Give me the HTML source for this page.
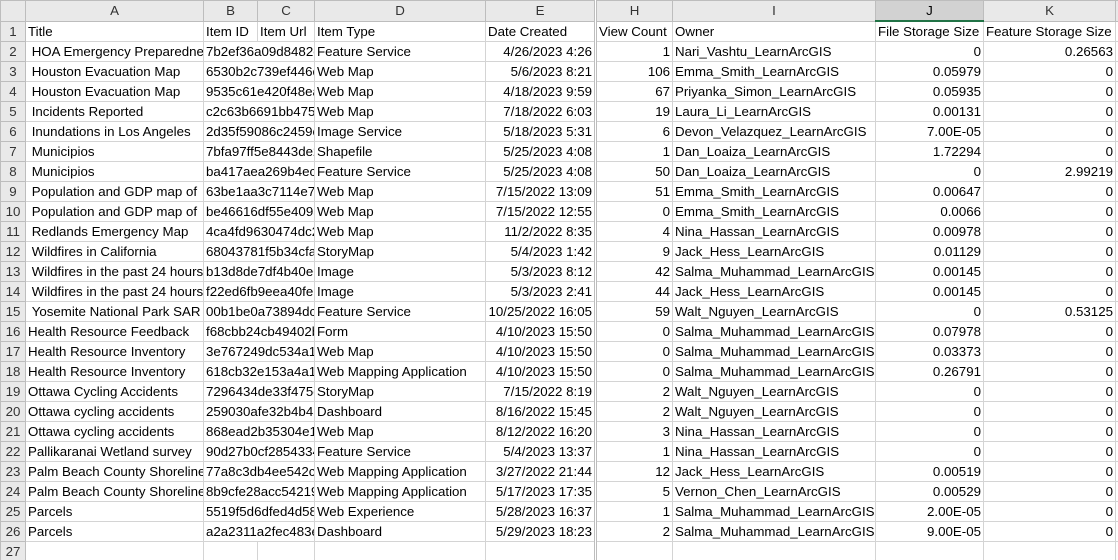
<!DOCTYPE html>
<html><head><meta charset="utf-8"><style>
html,body{margin:0;padding:0;background:#fff;width:1118px;height:560px;overflow:hidden}
table{border-collapse:collapse;table-layout:fixed;width:1118px;font-family:"Liberation Sans",Arial,sans-serif;font-size:13.3px;color:#000}
td{height:19px;border:1px solid #d4d4d4;padding:0 2px;white-space:nowrap;overflow:hidden;line-height:19px}
tr.h td{background:#e9e9e9;border-color:#bdbdbd;text-align:center;color:#333}
td.r{text-align:right}
td.n{background:#e9e9e9;border-color:#bdbdbd;text-align:center;color:#333;padding:0}
tr.h td.sel{background:#d2d2d2;border-bottom:2px solid #217346;color:#000}
td.g{border-left:3px double #bdbdbd}
</style></head><body>
<table>
<colgroup><col style="width:25px"><col style="width:178px"><col style="width:54px"><col style="width:57px"><col style="width:171px"><col style="width:110px"><col style="width:77px"><col style="width:203px"><col style="width:108px"><col style="width:132px"><col style="width:3px"></colgroup>
<tr class="h"><td></td><td>A</td><td>B</td><td>C</td><td>D</td><td>E</td><td class="g">H</td><td>I</td><td class="sel">J</td><td>K</td><td></td></tr>
<tr><td class="n">1</td><td>Title</td><td>Item ID</td><td>Item Url</td><td>Item Type</td><td>Date Created</td><td class="g">View Count</td><td>Owner</td><td>File Storage Size</td><td>Feature Storage Size</td><td></td></tr>
<tr><td class="n">2</td><td>&nbsp;HOA Emergency Preparedness</td><td colspan="2">7b2ef36a09d8482c8</td><td>Feature Service</td><td class="r">4/26/2023 4:26</td><td class="r g">1</td><td>Nari_Vashtu_LearnArcGIS</td><td class="r">0</td><td class="r">0.26563</td><td></td></tr>
<tr><td class="n">3</td><td>&nbsp;Houston Evacuation Map</td><td colspan="2">6530b2c739ef446c9</td><td>Web Map</td><td class="r">5/6/2023 8:21</td><td class="r g">106</td><td>Emma_Smith_LearnArcGIS</td><td class="r">0.05979</td><td class="r">0</td><td></td></tr>
<tr><td class="n">4</td><td>&nbsp;Houston Evacuation Map</td><td colspan="2">9535c61e420f48ea1</td><td>Web Map</td><td class="r">4/18/2023 9:59</td><td class="r g">67</td><td>Priyanka_Simon_LearnArcGIS</td><td class="r">0.05935</td><td class="r">0</td><td></td></tr>
<tr><td class="n">5</td><td>&nbsp;Incidents Reported</td><td colspan="2">c2c63b6691bb4758a</td><td>Web Map</td><td class="r">7/18/2022 6:03</td><td class="r g">19</td><td>Laura_Li_LearnArcGIS</td><td class="r">0.00131</td><td class="r">0</td><td></td></tr>
<tr><td class="n">6</td><td>&nbsp;Inundations in Los Angeles</td><td colspan="2">2d35f59086c2459e4</td><td>Image Service</td><td class="r">5/18/2023 5:31</td><td class="r g">6</td><td>Devon_Velazquez_LearnArcGIS</td><td class="r">7.00E-05</td><td class="r">0</td><td></td></tr>
<tr><td class="n">7</td><td>&nbsp;Municipios</td><td colspan="2">7bfa97ff5e8443de2</td><td>Shapefile</td><td class="r">5/25/2023 4:08</td><td class="r g">1</td><td>Dan_Loaiza_LearnArcGIS</td><td class="r">1.72294</td><td class="r">0</td><td></td></tr>
<tr><td class="n">8</td><td>&nbsp;Municipios</td><td colspan="2">ba417aea269b4ec3</td><td>Feature Service</td><td class="r">5/25/2023 4:08</td><td class="r g">50</td><td>Dan_Loaiza_LearnArcGIS</td><td class="r">0</td><td class="r">2.99219</td><td></td></tr>
<tr><td class="n">9</td><td>&nbsp;Population and GDP map of</td><td colspan="2">63be1aa3c7114e78</td><td>Web Map</td><td class="r">7/15/2022 13:09</td><td class="r g">51</td><td>Emma_Smith_LearnArcGIS</td><td class="r">0.00647</td><td class="r">0</td><td></td></tr>
<tr><td class="n">10</td><td>&nbsp;Population and GDP map of</td><td colspan="2">be46616df55e4095</td><td>Web Map</td><td class="r">7/15/2022 12:55</td><td class="r g">0</td><td>Emma_Smith_LearnArcGIS</td><td class="r">0.0066</td><td class="r">0</td><td></td></tr>
<tr><td class="n">11</td><td>&nbsp;Redlands Emergency Map</td><td colspan="2">4ca4fd9630474dc2a</td><td>Web Map</td><td class="r">11/2/2022 8:35</td><td class="r g">4</td><td>Nina_Hassan_LearnArcGIS</td><td class="r">0.00978</td><td class="r">0</td><td></td></tr>
<tr><td class="n">12</td><td>&nbsp;Wildfires in California</td><td colspan="2">68043781f5b34cfa0</td><td>StoryMap</td><td class="r">5/4/2023 1:42</td><td class="r g">9</td><td>Jack_Hess_LearnArcGIS</td><td class="r">0.01129</td><td class="r">0</td><td></td></tr>
<tr><td class="n">13</td><td>&nbsp;Wildfires in the past 24 hours</td><td colspan="2">b13d8de7df4b40e6</td><td>Image</td><td class="r">5/3/2023 8:12</td><td class="r g">42</td><td>Salma_Muhammad_LearnArcGIS</td><td class="r">0.00145</td><td class="r">0</td><td></td></tr>
<tr><td class="n">14</td><td>&nbsp;Wildfires in the past 24 hours</td><td colspan="2">f22ed6fb9eea40fe1</td><td>Image</td><td class="r">5/3/2023 2:41</td><td class="r g">44</td><td>Jack_Hess_LearnArcGIS</td><td class="r">0.00145</td><td class="r">0</td><td></td></tr>
<tr><td class="n">15</td><td>&nbsp;Yosemite National Park SAR</td><td colspan="2">00b1be0a73894dc9</td><td>Feature Service</td><td class="r">10/25/2022 16:05</td><td class="r g">59</td><td>Walt_Nguyen_LearnArcGIS</td><td class="r">0</td><td class="r">0.53125</td><td></td></tr>
<tr><td class="n">16</td><td>Health Resource Feedback</td><td colspan="2">f68cbb24cb49402b</td><td>Form</td><td class="r">4/10/2023 15:50</td><td class="r g">0</td><td>Salma_Muhammad_LearnArcGIS</td><td class="r">0.07978</td><td class="r">0</td><td></td></tr>
<tr><td class="n">17</td><td>Health Resource Inventory</td><td colspan="2">3e767249dc534a17</td><td>Web Map</td><td class="r">4/10/2023 15:50</td><td class="r g">0</td><td>Salma_Muhammad_LearnArcGIS</td><td class="r">0.03373</td><td class="r">0</td><td></td></tr>
<tr><td class="n">18</td><td>Health Resource Inventory</td><td colspan="2">618cb32e153a4a1e</td><td>Web Mapping Application</td><td class="r">4/10/2023 15:50</td><td class="r g">0</td><td>Salma_Muhammad_LearnArcGIS</td><td class="r">0.26791</td><td class="r">0</td><td></td></tr>
<tr><td class="n">19</td><td>Ottawa Cycling Accidents</td><td colspan="2">7296434de33f475c</td><td>StoryMap</td><td class="r">7/15/2022 8:19</td><td class="r g">2</td><td>Walt_Nguyen_LearnArcGIS</td><td class="r">0</td><td class="r">0</td><td></td></tr>
<tr><td class="n">20</td><td>Ottawa cycling accidents</td><td colspan="2">259030afe32b4b45</td><td>Dashboard</td><td class="r">8/16/2022 15:45</td><td class="r g">2</td><td>Walt_Nguyen_LearnArcGIS</td><td class="r">0</td><td class="r">0</td><td></td></tr>
<tr><td class="n">21</td><td>Ottawa cycling accidents</td><td colspan="2">868ead2b35304e1a</td><td>Web Map</td><td class="r">8/12/2022 16:20</td><td class="r g">3</td><td>Nina_Hassan_LearnArcGIS</td><td class="r">0</td><td class="r">0</td><td></td></tr>
<tr><td class="n">22</td><td>Pallikaranai Wetland survey</td><td colspan="2">90d27b0cf2854334</td><td>Feature Service</td><td class="r">5/4/2023 13:37</td><td class="r g">1</td><td>Nina_Hassan_LearnArcGIS</td><td class="r">0</td><td class="r">0</td><td></td></tr>
<tr><td class="n">23</td><td>Palm Beach County Shoreline</td><td colspan="2">77a8c3db4ee542c</td><td>Web Mapping Application</td><td class="r">3/27/2022 21:44</td><td class="r g">12</td><td>Jack_Hess_LearnArcGIS</td><td class="r">0.00519</td><td class="r">0</td><td></td></tr>
<tr><td class="n">24</td><td>Palm Beach County Shoreline</td><td colspan="2">8b9cfe28acc54219</td><td>Web Mapping Application</td><td class="r">5/17/2023 17:35</td><td class="r g">5</td><td>Vernon_Chen_LearnArcGIS</td><td class="r">0.00529</td><td class="r">0</td><td></td></tr>
<tr><td class="n">25</td><td>Parcels</td><td colspan="2">5519f5d6dfed4d58</td><td>Web Experience</td><td class="r">5/28/2023 16:37</td><td class="r g">1</td><td>Salma_Muhammad_LearnArcGIS</td><td class="r">2.00E-05</td><td class="r">0</td><td></td></tr>
<tr><td class="n">26</td><td>Parcels</td><td colspan="2">a2a2311a2fec483e</td><td>Dashboard</td><td class="r">5/29/2023 18:23</td><td class="r g">2</td><td>Salma_Muhammad_LearnArcGIS</td><td class="r">9.00E-05</td><td class="r">0</td><td></td></tr>
<tr><td class="n">27</td><td></td><td></td><td></td><td></td><td></td><td class="g"></td><td></td><td></td><td></td><td></td></tr>
</table>
</body></html>
